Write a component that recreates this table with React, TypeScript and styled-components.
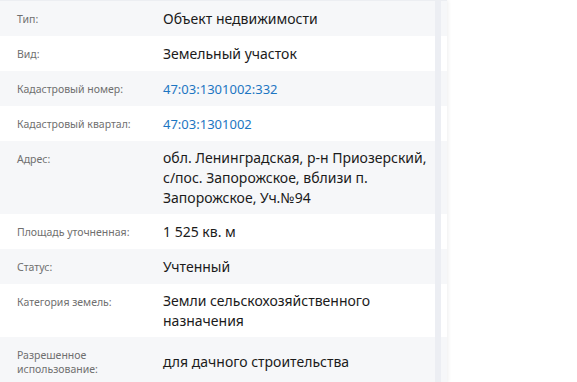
import styled, { createGlobalStyle } from "styled-components";

const GlobalStyle = createGlobalStyle`
  html, body {
    margin: 0;
    padding: 0;
    background: #ffffff;
    overflow: hidden;
  }
  body {
    font-family: "Noto Sans", "Open Sans", Arial, sans-serif;
  }
`;

type Field = {
  label: string;
  value: string;
  link?: boolean;
};

const fields: Field[] = [
  { label: "Тип:", value: "Объект недвижимости" },
  { label: "Вид:", value: "Земельный участок" },
  { label: "Кадастровый номер:", value: "47:03:1301002:332", link: true },
  { label: "Кадастровый квартал:", value: "47:03:1301002", link: true },
  {
    label: "Адрес:",
    value:
      "обл. Ленинградская, р-н Приозерский, с/пос. Запорожское, вблизи п. Запорожское, Уч.№94",
  },
  { label: "Площадь уточненная:", value: "1 525 кв. м" },
  { label: "Статус:", value: "Учтенный" },
  { label: "Категория земель:", value: "Земли сельскохозяйственного назначения" },
  { label: "Разрешенное использование:", value: "для дачного строительства" },
];

export default function App() {
  return (
    <>
      <GlobalStyle />
      <Panel>
        <List>
          {fields.map((f, i) => (
            <Row key={f.label} $striped={i % 2 === 0}>
              <Label>{f.label}</Label>
              <Value $link={f.link}>{f.value}</Value>
            </Row>
          ))}
        </List>
        <ScrollTrack />
      </Panel>
    </>
  );
}

const Panel = styled.div`
  position: relative;
  width: 447px;
  height: 100vh;
  overflow: hidden;
  border-top: 1px solid #eceef2;
  box-shadow: 1px 0 4px rgba(0, 0, 0, 0.07);
  background: #ffffff;
`;

const List = styled.div`
  display: flex;
  flex-direction: column;
`;

const Row = styled.div<{ $striped?: boolean }>`
  display: flex;
  align-items: center;
  padding: 7px 14px 6px 17px;
  background: ${(p) => (p.$striped ? "#f6f7f9" : "#ffffff")};
`;

const Label = styled.div`
  align-self: flex-start;
  flex: 0 0 124px;
  margin-right: 22px;
  padding: 4px 0;
  font-size: 10.5px;
  line-height: 14px;
  color: #6f6f6f;
`;

const Value = styled.div<{ $link?: boolean }>`
  flex: 1;
  font-size: ${(p) => (p.$link ? "13px" : "14px")};
  line-height: 20px;
  color: ${(p) => (p.$link ? "#1d76c2" : "#1b1b1b")};
`;

const ScrollTrack = styled.div`
  position: absolute;
  top: 0;
  bottom: 0;
  left: 435px;
  width: 6px;
  background: #eceef3;
`;
